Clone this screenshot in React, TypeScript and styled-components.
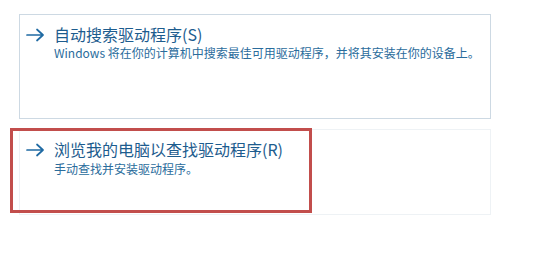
import React from "react";
import styled, { createGlobalStyle } from "styled-components";

const Global = createGlobalStyle`
  html, body { margin: 0; padding: 0; background: #ffffff; }
  body { width: 536px; height: 273px; overflow: hidden; }
`;

const Page = styled.div`
  box-sizing: border-box;
  width: 536px;
  height: 273px;
  padding: 14px 45px 0 19px;
  display: flex;
  flex-direction: column;
  gap: 10px;
  background: #ffffff;
  font-family: "Microsoft YaHei", "Noto Sans CJK SC", "Noto Sans", sans-serif;
`;

const Card = styled.div<{ $faint?: boolean; $height: number }>`
  position: relative;
  box-sizing: border-box;
  height: ${(p) => p.$height}px;
  border: 1px solid ${(p) => (p.$faint ? "#eef2f5" : "#cdd9e3")};
  padding: 11px 10px 0 6px;
  display: flex;
  flex-direction: column;
`;

const TitleRow = styled.div`
  display: flex;
  align-items: center;
  gap: 9px;
  height: 17px;
`;

const Arrow = styled.svg`
  width: 19px;
  height: 14px;
  flex: none;
`;

const Title = styled.span`
  font-size: 16px;
  line-height: 17px;
  color: #1d5c8e;
  white-space: nowrap;
`;

const Sub = styled.div<{ $gap: number }>`
  margin: ${(p) => p.$gap}px 0 0 28px;
  font-size: 12px;
  line-height: 13px;
  color: #2a6c9c;
  white-space: nowrap;
`;

const Highlight = styled.div`
  position: absolute;
  left: -10px;
  top: -2px;
  width: 302px;
  height: 85px;
  box-sizing: border-box;
  border: 3px solid #c24e4c;
  pointer-events: none;
`;

const ArrowIcon = () => (
  <Arrow viewBox="0 0 19 14">
    <path
      d="M1 7 H17 M11 1.5 L17 7 L11 12.5"
      fill="none"
      stroke="#1f6aa3"
      strokeWidth="1.7"
      strokeLinecap="round"
      strokeLinejoin="round"
    />
  </Arrow>
);

export default function App() {
  return (
    <>
      <Global />
      <Page>
        <Card $height={105}>
          <TitleRow>
            <ArrowIcon />
            <Title>自动搜索驱动程序(S)</Title>
          </TitleRow>
          <Sub $gap={3}>Windows 将在你的计算机中搜索最佳可用驱动程序，并将其安装在你的设备上。</Sub>
        </Card>
        <Card $faint $height={86}>
          <TitleRow>
            <ArrowIcon />
            <Title>浏览我的电脑以查找驱动程序(R)</Title>
          </TitleRow>
          <Sub $gap={4}>手动查找并安装驱动程序。</Sub>
          <Highlight />
        </Card>
      </Page>
    </>
  );
}
